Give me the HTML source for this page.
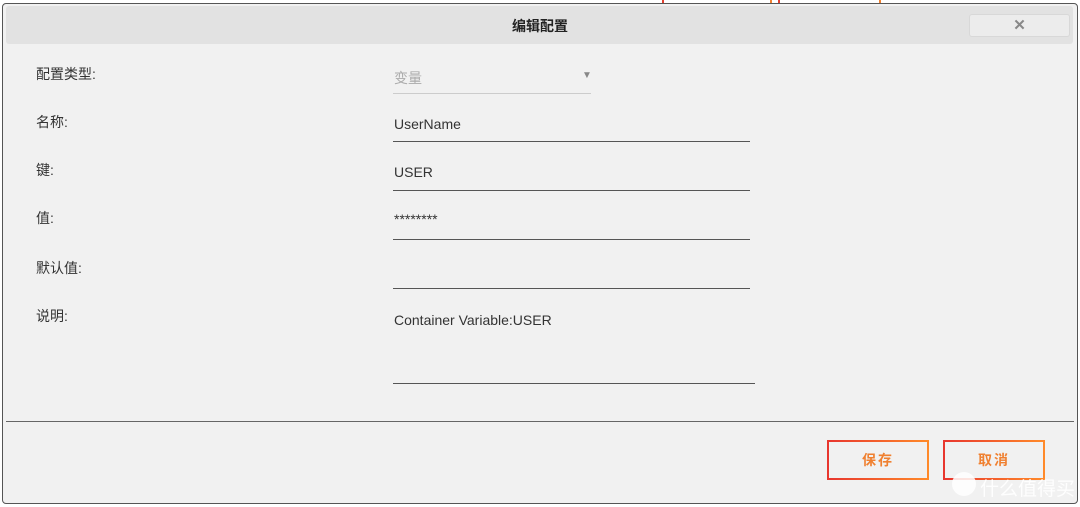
<!DOCTYPE html>
<html><head><meta charset="utf-8"><style>
*{margin:0;padding:0;box-sizing:border-box}
body{width:1080px;height:507px;background:#fff;position:relative;overflow:hidden;font-family:"Liberation Sans","Noto Sans CJK SC",sans-serif;color:#333}
.a{position:absolute}
.dlg{left:2px;top:3px;width:1076px;height:501px;background:#f1f1f1;border:1px solid #555;border-radius:4px}
.hd{left:6px;top:6px;width:1067px;height:38px;background:#e2e2e2;border-radius:3px}
.lbl{font-size:14px;color:#333;left:36px}
.v{font-size:14px;left:394px;color:#333}
.ln{left:393px;width:357px;height:1px;background:#555}
.btn{top:440px;width:102px;height:40px;border:2px solid;border-image:linear-gradient(90deg,#e8362e,#ff8a2a) 1;font-size:14px;font-weight:bold;color:#f08030;text-align:center;line-height:36px;letter-spacing:2px;border-radius:4px}
</style></head><body>
<div class="a" style="left:655px;top:0;width:230px;height:3px"><div class="a" style="left:7px;width:2px;height:3px;background:#e04030"></div><div class="a" style="left:115px;width:2px;height:3px;background:#f08030"></div><div class="a" style="left:123px;width:2px;height:3px;background:#e04030"></div><div class="a" style="left:224px;width:2px;height:3px;background:#f08030"></div></div>
<div class="a dlg"></div>
<div class="a hd"></div>
<div class="a" style="left:0;width:1080px;top:16px;text-align:center;font-size:14px;font-weight:bold;color:#222">编辑配置</div>
<div class="a" style="left:969px;top:14px;width:101px;height:23px;background:#ececec;border:1px solid #d8d8d8;border-radius:3px;text-align:center;font-size:15px;line-height:21px;color:#888;font-weight:bold">✕</div>
<div class="a lbl" style="top:64px">配置类型:</div>
<div class="a lbl" style="top:112px">名称:</div>
<div class="a lbl" style="top:160px">键:</div>
<div class="a lbl" style="top:208px">值:</div>
<div class="a lbl" style="top:258px">默认值:</div>
<div class="a lbl" style="top:306px">说明:</div>
<div class="a v" style="top:68px;color:#aaa">变量</div>
<div class="a" style="left:582px;top:70px;font-size:10px;color:#888">▼</div>
<div class="a" style="left:393px;top:93px;width:198px;height:1px;background:#ccc"></div>
<div class="a v" style="top:116px">UserName</div>
<div class="a ln" style="top:141px"></div>
<div class="a v" style="top:164px">USER</div>
<div class="a ln" style="top:190px"></div>
<div class="a v" style="top:211px">********</div>
<div class="a ln" style="top:239px"></div>
<div class="a ln" style="top:288px"></div>
<div class="a v" style="top:312px">Container Variable:USER</div>
<div class="a ln" style="top:383px;width:362px"></div>
<div class="a" style="left:6px;top:421px;width:1068px;height:1px;background:#666"></div>
<div class="a btn" style="left:827px">保存</div>
<div class="a btn" style="left:943px">取消</div>
<div class="a" style="left:952px;top:472px;width:24px;height:24px;border-radius:50%;background:rgba(255,255,255,.85)"></div>
<div class="a" style="left:980px;top:474px;font-size:19px;color:rgba(255,255,255,.9)">什么值得买</div>
</body></html>
